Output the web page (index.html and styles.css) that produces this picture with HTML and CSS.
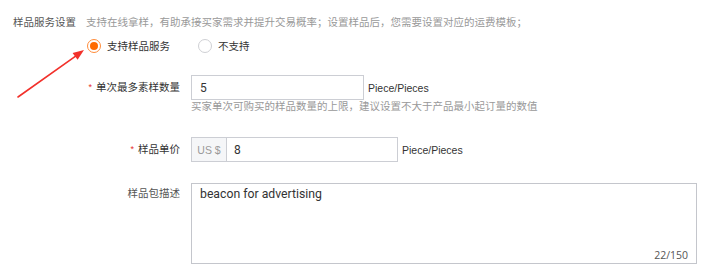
FILE: index.html
```html
<!DOCTYPE html>
<html lang="zh-CN">
<head>
<meta charset="utf-8">
<title>样品服务设置</title>
<link rel="stylesheet" href="styles.css">
</head>
<body>
<div class="page">
  <div class="head">
    <span class="sec-label">样品服务设置</span>
    <span class="sec-desc">支持在线拿样，有助承接买家需求并提升交易概率；设置样品后，您需要设置对应的运费模板；</span>
  </div>
  <div class="radios">
    <label class="radio"><span class="dot checked"></span><span>支持样品服务</span></label>
    <label class="radio"><span class="dot"></span><span>不支持</span></label>
  </div>

  <div class="row row-qty">
    <div class="label"><span class="req">*</span>单次最多素样数量</div>
    <div class="control">
      <div class="line">
        <input class="input qty" type="text" value="5">
        <span class="unit">Piece/Pieces</span>
      </div>
      <div class="help">买家单次可购买的样品数量的上限，建议设置不大于产品最小起订量的数值</div>
    </div>
  </div>

  <div class="row row-price">
    <div class="label"><span class="req">*</span>样品单价</div>
    <div class="control">
      <div class="line">
        <div class="group">
          <span class="addon">US $</span>
          <input class="input inner" type="text" value="8">
        </div>
        <span class="unit">Piece/Pieces</span>
      </div>
    </div>
  </div>

  <div class="row row-desc">
    <div class="label top">样品包描述</div>
    <div class="control">
      <div class="area-wrap">
        <textarea class="area">beacon for advertising</textarea>
        <span class="count">22/150</span>
      </div>
    </div>
  </div>

  <svg class="arrow" width="720" height="275" viewBox="0 0 720 275" aria-hidden="true">
    <line x1="18" y1="97" x2="76" y2="55.8" stroke="#f2312b" stroke-width="1.6" stroke-linecap="round"/>
    <polygon points="84,50 77.6,59.8 72.6,52.9" fill="#f2312b"/>
  </svg>
</div>
</body>
</html>
```

FILE: styles.css
```css
* { box-sizing: border-box; }
html, body { margin: 0; padding: 0; background: #fff; }
body {
  font-family: "Liberation Sans", "Noto Sans CJK SC", sans-serif;
  font-size: 10.5px;
  color: #333;
}
.page { position: relative; width: 720px; height: 275px; overflow: hidden; }

.head {
  display: flex;
  gap: 10px;
  padding: 14px 0 0 13px;
  line-height: 16px;
}
.sec-label { color: #555; }
.sec-desc { color: #999; }

.radios {
  display: flex;
  gap: 28px;
  margin-top: 8px;
  padding-left: 87px;
  line-height: 16px;
}
.radio { display: flex; align-items: center; gap: 6px; color: #333; }
.dot {
  width: 14px; height: 14px;
  border: 1px solid #cfd0d4;
  border-radius: 50%;
  display: flex; align-items: center; justify-content: center;
}
.dot.checked { border-color: #ff8c3a; }
.dot.checked::after {
  content: "";
  width: 8px; height: 8px;
  border-radius: 50%;
  background: #ff6a00;
}

.row {
  display: grid;
  grid-template-columns: 180px auto;
  column-gap: 11px;
}
.row-qty { margin-top: 21px; }
.row-price { margin-top: 24px; }
.row-desc { margin-top: 21px; }

.label {
  text-align: right;
  line-height: 25px;
  color: #333;
}
.label.top { line-height: 16px; padding-top: 2px; color: #555; }
.req { color: #e62e2e; font-size: 9px; margin-right: 4px; vertical-align: 1px; }

.line { display: flex; align-items: center; gap: 4px; }
.unit { color: #333; }

.input {
  height: 25px;
  border: 1px solid #ccced4;
  padding: 0 8px;
  font-family: "Roboto", "Liberation Sans", sans-serif;
  font-size: 12px;
  color: #333;
  outline: none;
  background: #fff;
}
.qty { width: 173px; }

.help { color: #999; line-height: 13px; margin-top: 0; }

.group {
  display: flex;
  width: 207px;
  height: 25px;
  border: 1px solid #ccced4;
}
.addon {
  width: 35px;
  background: #f5f6f8;
  color: #999;
  border-right: 1px solid #ccced4;
  display: flex; align-items: center; justify-content: center;
  font-family: "Liberation Sans", sans-serif;
}
.input.inner { border: none; height: 23px; flex: 1; width: 100px; padding-left: 7px; }

.area-wrap { position: relative; width: 506px; height: 81px; }
.area {
  display: block;
  width: 100%; height: 100%;
  border: 1px solid #c4c6cc;
  padding: 2px 8px;
  resize: none;
  font-family: "Roboto", "Liberation Sans", sans-serif;
  font-size: 12.25px;
  line-height: 16px;
  color: #333;
  outline: none;
}
.count {
  position: absolute;
  right: 9px;
  bottom: 2px;
  font-family: "Open Sans", "Liberation Sans", sans-serif;
  font-size: 10.5px;
  line-height: 14px;
  color: #555;
}

.arrow { position: absolute; left: 0; top: 0; pointer-events: none; }
```
